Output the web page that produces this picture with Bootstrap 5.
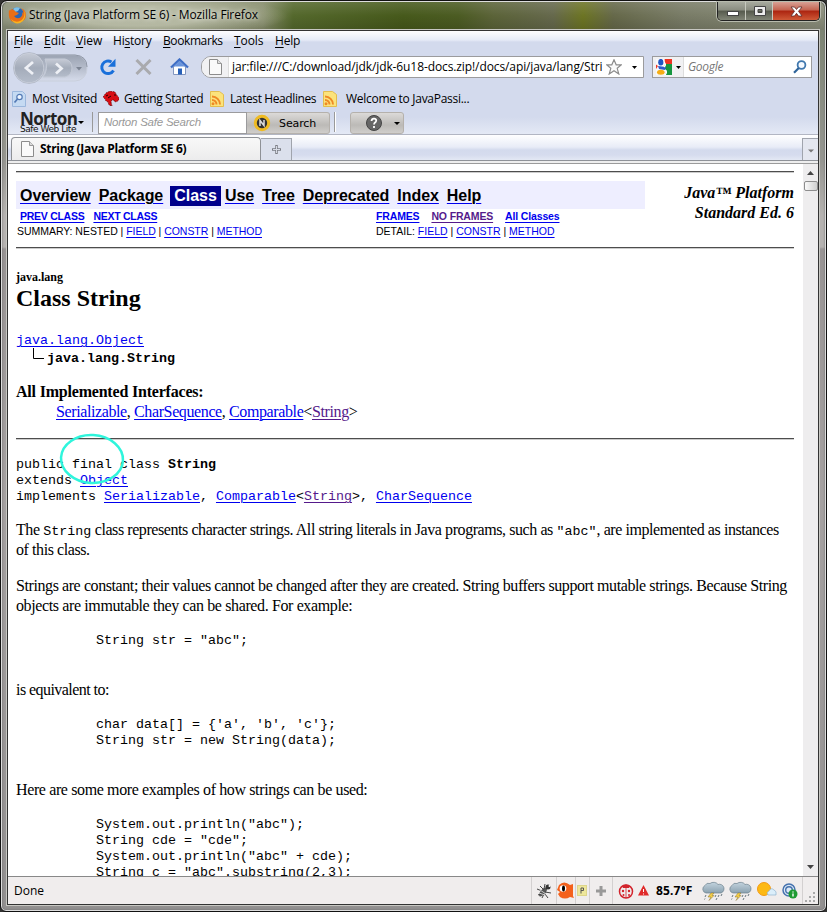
<!DOCTYPE html>
<html lang="en">
<head>
<meta charset="utf-8">
<title>String (Java Platform SE 6)</title>
<link href="https://cdn.jsdelivr.net/npm/bootstrap@5.3.0/dist/css/bootstrap.min.css" rel="stylesheet">
<style>
body{margin:0;background:#333;overflow:hidden}
.win{width:827px;height:912px;overflow:hidden;border:1px solid #111;border-radius:7px 7px 6px 6px;
 background:linear-gradient(#77806c 0,#969691 160px,#b5b2b0 215px,#b5b2b0 246px,#989494 248px,#a5a1a1 500px,#929090 100%);
 box-shadow:inset 0 0 0 1px #ddd,inset 0 0 2px 1px #666;font-family:"Open Sans","Noto Sans",sans-serif;font-size:12px;color:#000;line-height:16px}
.titlebar{height:28px;margin:1px 2px 0;border-radius:6px 6px 0 0;padding-left:5px;
 background:radial-gradient(ellipse 150px 22px at 135px 14px,rgba(190,193,172,.85) 45%,transparent 100%),linear-gradient(rgba(255,255,255,.12),transparent 50%,rgba(0,0,0,.12)),linear-gradient(90deg,#8b9079 0,#858c6a 260px,#54682c 290px,#46591b 400px,#4b5b22 455px,#5b6338 490px,#65684c 550px,#6c7423 580px,#656849 610px,#787b66 680px,#8a8d7b 100%)}
.ttl{font-size:12px;letter-spacing:-.12px;text-shadow:0 0 5px #fff}
.ctl{height:19px;margin-right:4px;border:1px solid #222;border-top:0;border-radius:0 0 5px 5px;box-shadow:0 0 0 1px #b8bbae;overflow:hidden}
.ctl>span{width:28px;background:linear-gradient(#a7aa9e,#8a8d80 45%,#565a4d 50%,#818576);border-right:1px solid #c8cabf}
.ctl>.mid{width:27px}
.ctl>.cls{width:46px;border:0;background:linear-gradient(#d8a195,#c46350 45%,#ac2410 50%,#cf5937)}
.inner{margin:0 7px 0 6px;height:875px;border:1px solid #333;background:#fff;position:relative;outline:1px solid #c7c7c2;width:812px}
.chrome{height:104px;background:linear-gradient(#fdfdfe 0,#e6ebf7 9px,#d3daed 11px,#d3daed 86px,#e4e9f5 103px);border-bottom:1px solid #b2b6c3}
.menus{height:19px;padding-left:6px}
.menus u{text-underline-offset:2px}
.m{flex:none;white-space:nowrap}
.navrow{height:35px;padding-left:3px}
.box{height:22px;background:#fff;border:1px solid #9b9b9d;overflow:hidden;flex:none}
.bm{height:27px;padding-left:4px}
.nrt{height:22px}
.nlogo{font:bold 17px/13px "Open Sans",sans-serif;letter-spacing:-.65px;color:#222}
.nlogo2{font:9px/9px "DejaVu Sans",sans-serif;letter-spacing:-.45px;color:#111}
.nbtn{height:22px;border:1px solid #b5b1ac;border-radius:3px;background:linear-gradient(#dcdad8,#bcbab7 60%,#d0cecb)}
.tabs{height:26px;background:linear-gradient(#fff 0,#e8ecf7 12px,#d3daed 15px,#d6dcee 20px,#e3e8f4);border-bottom:1px solid #8f9298;padding-left:3px}
.tab{width:250px;height:23px;margin-top:2px;border:1px solid #8e9196;border-bottom:0;border-radius:4px 4px 0 0;background:linear-gradient(#f8f8f8,#ececed);font-weight:bold;letter-spacing:-.31px}
.strip{height:3px;background:#eee;border-bottom:1px solid #9b9b9b}
.doc{height:712px;overflow:hidden;font-family:"Liberation Serif",serif;font-size:16px;line-height:20px;padding:7px 9px 0 8px;width:795px;flex:none}
.rule{height:2px;background:linear-gradient(#4d4d4d 50%,#ccc 50%)}
.doc a{color:#00e;text-decoration:underline;text-underline-offset:2px;text-decoration-thickness:1px}
.doc a.v{color:#551a8b}
.topnav{height:28px;width:629px;background:#eeeeff;padding:5px 4px 3px;font:bold 16px/19px "Liberation Sans",sans-serif}
.doc .topnav a{color:#000;text-decoration-color:#00e;margin-right:8px;letter-spacing:-.06px}
.topnav .cur{background:#00008b;color:#fff;padding:0 4px;margin:0 4px 0 -1px;height:20px}
.sub{font:10.500px/15px "Liberation Sans",sans-serif;width:629px;height:15px;white-space:nowrap}
.sub.fw-bold{letter-spacing:-.15px}
.sub div:first-child{width:360px;flex:none;letter-spacing:-.04px}
.sub.fw-bold div:first-child{letter-spacing:-.27px}
.mono{font:13.33px/16px "Liberation Mono",monospace;white-space:pre;margin:0;overflow:visible;color:#000}
.para{margin:16px 0;white-space:nowrap}
.para code{font:13.33px "Liberation Mono",monospace;color:#000;letter-spacing:0}
.t35{letter-spacing:-.38px}.t38{letter-spacing:-.39px}.t44{letter-spacing:-.427px}.t48{letter-spacing:-.415px}.t52{letter-spacing:-.55px}
.sb{width:15px;background:#eeedee;flex:none}
.thumb{width:14px;height:10px;border:1px solid #8d8d8d;border-radius:2px;background:linear-gradient(90deg,#fafafa,#cfcfcf)}
.status{height:28px;background:#f0eded;border-top:1px solid #888;padding-left:6px}
.cell{height:27px;border-left:1px solid #d3d0d0;flex:none}
.ring{position:absolute;left:51px;top:402px}
svg{display:block;flex:none}
</style>
<script src="https://cdn.jsdelivr.net/npm/bootstrap@5.3.0/dist/js/bootstrap.bundle.min.js"></script>
</head>
<body>
<svg width="0" height="0" class="position-absolute"><defs>
<linearGradient id="gp" x2="0" y2="1"><stop stop-color="#9ba3b2"/><stop offset=".5" stop-color="#b5bccb"/><stop offset="1" stop-color="#d6dceb"/></linearGradient>
<linearGradient id="gc" x2="0" y2="1"><stop stop-color="#c6cbd6"/><stop offset=".5" stop-color="#a4acba"/><stop offset="1" stop-color="#b5bdcb"/></linearGradient>
<linearGradient id="gcl" x2="0" y2="1"><stop stop-color="#c3d3de"/><stop offset="1" stop-color="#8ba2b0"/></linearGradient>
<symbol id="rss" viewBox="0 0 14 16"><path d="M.5.5h9l4 3v12h-13z" fill="#fbe37c" stroke="#e3bd4e"/><path d="M2 5.500a8 8 0 0 1 8 8M2 9a4.500 4.500 0 0 1 4.500 4.500" fill="none" stroke="#ef8a25" stroke-width="2"/><circle cx="3" cy="12.700" r="1.500" fill="#ef8a25"/></symbol>
<symbol id="page" viewBox="0 0 13 16"><path d="M.5.5h8l4 4v11h-12z" fill="#fafafa" stroke="#8c8c8c"/><path d="M8.500.5v4h4" fill="#ddd" stroke="#999"/></symbol>
<symbol id="rain" viewBox="0 0 24 20"><path d="M5 12a4 4 0 0 1-1-7.500 4 4 0 0 1 5-2 5 4 0 0 1 8 1 4 4 0 0 1 3 8.500z" fill="url(#gcl)" stroke="#6d818e" stroke-width=".7"/><path d="M10 12l-3 4h3l-2 3.500 5-5h-2l2-2.500z" fill="#f6cf45" stroke="#8a7430" stroke-width=".5"/><path d="M5 14l-1 2M15 14l-1 2M18 14l-1 2M16 17l-1 2M21 13l-1 2M4 17.500l-.5 1" stroke="#69777f"/></symbol>
</defs></svg>
<div class="win">
 <div class="titlebar d-flex align-items-start">
  <svg width="18" height="18" viewBox="0 0 18 18" style="margin-top:4px"><circle cx="9" cy="8.500" r="7" fill="#2c66b4"/><path d="M5 3q3-3 7-1l-2 3-3 1z" fill="#7fc3ec"/><path d="M1 3q0 2 1 1.500Q4 2.500 6 4l2 2 3 1-2 2-3 1q3 4 7 1 2-2 1-5 1 1 1 2 1-3-2-6 5 2 5 7 0 7-8 7.500Q1 17 .8 9 .7 6 1 3z" fill="#e96e16"/><path d="M16 4q2 8-4 11-5 2-9-2 5 8 12 2 4-5 1-11z" fill="#f9b31e"/></svg>
  <div class="ttl m" style="margin:5px auto 0 3px">String (Java Platform SE 6) - Mozilla Firefox</div>
  <div class="ctl d-flex">
   <span><svg width="28" height="19"><rect x="9.500" y="9.500" width="11" height="4" fill="#fff" stroke="#444"/></svg></span>
   <span class="mid"><svg width="27" height="19"><path d="M8.500 4.500h11v9h-11zM12 7.500h4v3h-4z" fill="#eee" stroke="#444" fill-rule="evenodd"/></svg></span>
   <span class="cls"><svg width="46" height="19"><path d="M18 5h3.500l2 2.500 2-2.500H29l-3.500 4.300L29 14h-3.500l-2-2.700-2 2.700H18l3.500-4.700z" fill="#fff" stroke="#5c2b2b" stroke-width=".8"/></svg></span>
  </div>
 </div>
 <div class="inner">
  <div class="chrome">
   <div class="menus d-flex align-items-center">
    <div class="m" style="width:30px"><u>F</u>ile</div><div class="m" style="width:32px"><u>E</u>dit</div><div class="m" style="width:37px"><u>V</u>iew</div><div class="m" style="width:50px;letter-spacing:-.2px">Hi<u>s</u>tory</div><div class="m" style="width:71px;letter-spacing:-.4px"><u>B</u>ookmarks</div><div class="m" style="width:41px;letter-spacing:-.1px"><u>T</u>ools</div><div class="m" style="letter-spacing:-.2px"><u>H</u>elp</div>
   </div>
   <div class="navrow d-flex align-items-center">
    <svg width="78" height="32" viewBox="0 0 78 32"><path d="M15 3H64a12 12 0 0 1 12 13 12 12 0 0 1-12 13H15z" fill="url(#gp)" stroke="#c9cfdc"/><path d="M15 3H64q12 1 12 12" fill="none" stroke="#8e96a5"/><path d="M34 7h20q7 2 7 9t-7 9H32q6-8 2-18z" fill="url(#gc)" stroke="#c4cad6"/><circle cx="18" cy="16" r="15" fill="url(#gc)" stroke="#d0d5e0"/><circle cx="18" cy="16" r="15.500" fill="none" stroke="#a2a9b7" stroke-width=".6"/><path d="M22 10l-7 6 7 6M45 11.500l5.500 5-5.500 5" fill="none" stroke="#eef0f5" stroke-width="2.800"/><path d="M65 15h6l-3 3.500z" fill="#7c8493"/></svg>
    <svg width="18" height="18" viewBox="0 0 18 18" style="margin-left:10px;margin-top:-2px"><path d="M14.500 12.500A6.300 6.300 0 1 1 12.500 4" fill="none" stroke="#1a70da" stroke-width="3"/><path d="M16.500.8v8H9z" fill="#1a70da"/></svg>
    <svg width="17" height="16" viewBox="0 0 17 16" style="margin-left:18px;margin-top:-2px"><path d="M1.500 1l14 14M15.500 1l-14 14" stroke="#a9aaae" stroke-width="3"/></svg>
    <svg width="19" height="18" viewBox="0 0 19 18" style="margin-left:18px;margin-top:-2px"><path d="M3.500 9v7.500h12V9l-6-6z" fill="#fff" stroke="#8296c0"/><path d="M1 9.500l8.500-8 8.500 8" fill="none" stroke="#3e6ec6" stroke-width="2.300"/><path d="M4 8.500l5.500-5.500L15 8.500z" fill="#6893dc"/><path d="M8 10.500h4v6H8z" fill="#2860b8"/></svg>
    <div class="box d-flex align-items-center" style="width:443px;margin-left:12px;margin-top:-1px;border-radius:10px 0 0 10px">
     <div class="d-flex align-items-center justify-content-center h-100 flex-shrink-0" style="width:27px;background:#f1f1f3;border-right:1px solid #ddd"><svg width="13" height="16"><use href="#page"/></svg></div>
     <div class="m" style="width:374px;margin-left:3px;letter-spacing:-.1px">jar:file:///C:/download/jdk/jdk-6u18-docs.zip!/docs/api/java/lang/Stri</div>
     <svg width="16" height="16" viewBox="0 0 16 16"><path d="M8 .8l2.200 5h5.200l-4.200 3.500 1.600 5.700L8 11.800 3.200 15l1.600-5.700L.6 5.800h5.200z" fill="#fafafa" stroke="#8c8c8c" stroke-width="1.200"/></svg>
     <svg width="5" height="3" style="margin-left:10px"><path d="M0 0h5L2.500 3z"/></svg>
    </div>
    <div class="box d-flex align-items-center" style="width:160px;margin-left:8px;margin-top:-1px">
     <div class="d-flex align-items-center h-100 flex-shrink-0" style="width:31px;background:#f1f1f3;border-right:1px solid #ddd;padding-left:3px"><svg width="16" height="16" viewBox="0 0 16 16"><path d="M8 0h8v5H9z" fill="#e32"/><path d="M9 5h7v11H9l2-4-3-3z" fill="#16963f"/><path d="M0 0h9v16H0z" fill="#fff" opacity=".6"/><path d="M0 5.500l2 1.500-2 3z" fill="#e32"/><ellipse cx="4.800" cy="3.200" rx="2.600" ry="3.300" fill="#1d54c4"/><path d="M2 7l8 1-1 3-6-1z" fill="#2b5bcc"/><path d="M8 3q3 3 0 5M9 11q3 2 0 5" fill="none" stroke="#fff" stroke-width="1.200"/><ellipse cx="4.800" cy="13.300" rx="3.800" ry="2.500" fill="#f5ad15"/></svg><svg width="5" height="3" style="margin-left:4px"><path d="M0 0h5L2.500 3z"/></svg></div>
     <div class="m fst-italic" style="margin-left:4px;color:#777;letter-spacing:-.3px">Google</div>
     <svg width="14" height="14" viewBox="0 0 14 14" class="ms-auto" style="margin-right:4px"><circle cx="8.500" cy="5" r="3.900" fill="#f4f9ff" stroke="#4078ae" stroke-width="1.800"/><path d="M5.800 8L1 12.800" stroke="#2f649a" stroke-width="2.200"/></svg>
    </div>
   </div>
   <div class="bm d-flex align-items-center">
    <svg width="14" height="16" viewBox="0 0 14 16"><path d="M.5.5h10l3 3v12H.5z" fill="#c5daf2" stroke="#9bb7dc"/><circle cx="7.500" cy="6" r="2.700" fill="#eef6ff" stroke="#5379b5" stroke-width="1.200"/><path d="M5.500 8L2.500 11.500" stroke="#5379b5" stroke-width="1.700"/></svg>
    <div class="m" style="width:71px;margin-left:6px;letter-spacing:-.28px">Most Visited</div>
    <svg width="16" height="15" viewBox="0 0 16 15"><path d="M0 6l3-4 4-2 5 1 1 2 3 4v2l-3 2-2-1 0-1-2 0-1 2 1 4-3-1-1-3-2-1-1-2z" fill="#d80c12" stroke="#5b0708" stroke-width=".7" stroke-dasharray="1.500 1"/><path d="M11 4h2M3 5l2-1M5 7l3-2" stroke="#200"/></svg>
    <div class="m" style="width:81px;margin-left:5px;letter-spacing:-.38px">Getting Started</div>
    <svg width="14" height="16" style="margin-left:5px"><use href="#rss"/></svg>
    <div class="m" style="width:87px;margin-left:6px;letter-spacing:-.4px">Latest Headlines</div>
    <svg width="14" height="16" style="margin-left:6px"><use href="#rss"/></svg>
    <div class="m" style="margin-left:9px;letter-spacing:-.28px">Welcome to JavaPassi...</div>
   </div>
   <div class="nrt d-flex">
    <div style="width:77px;padding:0 0 0 12px"><div class="nlogo m">Norton</div><div class="nlogo2 m">Safe Web Lite</div></div>
    <svg width="6" height="3" style="margin:9px 0 0 -7px"><path d="M0 0h6L3 3z"/></svg>
    <div style="width:1px;height:20px;background:#999;margin:0 0 0 8px"></div>
    <div class="box m" style="width:149px;margin-left:5px;padding:1px 5px 0;color:#999;font:italic 11.500px/17px 'Liberation Sans',sans-serif;letter-spacing:-.22px">Norton Safe Search</div>
    <div class="nbtn d-flex align-items-center" style="width:83px;border-left:0;border-radius:0 3px 3px 0"><svg width="18" height="18" style="margin-left:6px"><circle cx="9" cy="9" r="6.700" fill="#333" stroke="#efbb23" stroke-width="3"/><path d="M7 12V6.500l4 5V6" fill="none" stroke="#ddd" stroke-width="1.500"/></svg><div class="m" style="margin-left:8px;font:11px 'DejaVu Sans',sans-serif;letter-spacing:-.1px">Search</div></div>
    <div style="width:2px;height:20px;background:#fff;border-left:1px solid #999;margin:0 15px 0 4px"></div>
    <div class="nbtn d-flex align-items-center" style="width:54px;margin-left:-1px"><svg width="16" height="16" style="margin-left:15px"><circle cx="8" cy="8" r="7.500" fill="#666" stroke="#444"/><path d="M5.500 6q.3-2.500 2.700-2.300 3 .6 1.600 3Q8 8 8 9.500M8 11v2" fill="none" stroke="#fff" stroke-width="1.800"/></svg><svg width="6" height="3" style="margin-left:12px"><path d="M0 0h6L3 3z"/></svg></div>
   </div>
  </div>
  <div class="tabs d-flex">
   <div class="tab d-flex align-items-center"><svg width="13" height="16" style="margin:0 6px 0 9px"><use href="#page"/></svg><span class="m">String (Java Platform SE 6)</span></div>
   <div style="width:31px;height:22px;border:1px solid #a0a4ad;border-bottom:0;margin-top:3px;border-left:0;background:#dbe0ec"><svg width="30" height="22"><path d="M15.500 6v9M11 10.500h9" stroke="#7b7e85" stroke-width="2.500"/><path d="M15.500 7v7M12 10.500h7" stroke="#d6dae4" stroke-width="1"/></svg></div>
   <div class="ms-auto" style="width:16px;height:22px;border:1px solid #a0a4ad;border-bottom:0;border-right:0;margin-top:3px;background:#e4e7f0"><svg width="15" height="22"><path d="M5 10.500h6l-3 3z" fill="#777"/></svg></div>
  </div>
  <div class="strip"></div>
  <div class="d-flex">
   <div class="doc">
    <div class="rule"></div>
    <div class="d-flex" style="height:74px;padding-top:8px">
     <div>
      <div class="topnav d-flex"><a href="#">Overview</a><a href="#">Package</a><span class="cur">Class</span><a href="#">Use</a><a href="#">Tree</a><a href="#">Deprecated</a><a href="#">Index</a><a href="#">Help</a></div>
      <div class="sub d-flex fw-bold" style="padding-left:4px"><div style="width:356px"><a href="#">PREV CLASS</a><a href="#" style="margin-left:9px">NEXT CLASS</a></div><div><a href="#">FRAMES</a><a href="#" class="v" style="margin:0 12px">NO FRAMES</a><a href="#">All Classes</a></div></div>
      <div class="sub d-flex"><div style="padding-left:1px">SUMMARY: NESTED | <a href="#">FIELD</a> | <a href="#">CONSTR</a> | <a href="#">METHOD</a></div><div>DETAIL: <a href="#">FIELD</a> | <a href="#">CONSTR</a> | <a href="#">METHOD</a></div></div>
     </div>
     <div class="fw-bold fst-italic text-end flex-fill m" style="padding-top:2px">Java™ Platform<br>Standard Ed. 6</div>
    </div>
    <div class="rule"></div>
    <div class="fw-bold" style="font-size:12px;line-height:16px;margin-top:20px">java.lang</div>
    <div class="fw-bold" style="font-size:24px;line-height:27px">Class String</div>
    <div class="mono" style="margin-top:21px"><a href="#">java.lang.Object</a></div>
    <div class="mono d-flex fw-bold" style="height:18px;padding-top:2px"><svg width="12" height="12" viewBox="0 0 12 12" style="margin:-3px 3px 0 17px"><path d="M.5 0v10.500H11" fill="none" stroke="#000"/></svg><span style="margin-left:-1px">java.lang.String</span></div>
    <div class="fw-bold" style="margin-top:15px;letter-spacing:-.2px">All Implemented Interfaces:</div>
    <div style="padding-left:40px;margin-bottom:16px" class="m t38"><a href="#">Serializable</a>, <a href="#">CharSequence</a>, <a href="#">Comparable</a>&lt;<a href="#" class="v">String</a>&gt;</div>
    <div class="rule"></div>
    <pre class="mono" style="margin-top:17px">public final class <b>String</b>
extends <a href="#">Object</a>
implements <a href="#">Serializable</a>, <a href="#">Comparable</a>&lt;<a href="#" class="v">String</a>&gt;, <a href="#">CharSequence</a></pre>
    <div class="para" style="margin:15px 0 16px"><span class="t44">The <code>String</code> class represents character strings. All string literals in Java programs, such as <code>"abc"</code>, are implemented as instances</span><br><span class="t44">of this class.</span></div>
    <div class="para" style="margin-bottom:17px"><span class="t48">Strings are constant; their values cannot be changed after they are created. String buffers support mutable strings. Because String</span><br><span class="t35">objects are immutable they can be shared. For example:</span></div>
    <pre class="mono">          String str = "abc";</pre>
    <div class="para t52" style="margin:31px 0 17px">is equivalent to:</div>
    <pre class="mono">          char data[] = {'a', 'b', 'c'};
          String str = new String(data);</pre>
    <div class="para t35" style="margin:31px 0 17px">Here are some more examples of how strings can be used:</div>
    <pre class="mono">          System.out.println("abc");
          String cde = "cde";
          System.out.println("abc" + cde);
          String c = "abc".substring(2,3);</pre>
   </div>
   <div class="sb d-flex flex-column align-items-center">
    <svg width="15" height="17"><path d="M4 11h7L7.500 7z" fill="#444"/></svg>
    <div class="thumb"></div>
    <svg width="15" height="18" class="mt-auto"><path d="M4 7h7l-3.500 4z" fill="#444"/></svg>
   </div>
  </div>
  <div class="status d-flex align-items-center">
   <div class="m me-auto">Done</div>
   <div class="cell d-flex align-items-center" style="width:25px;padding-left:4px"><svg width="16" height="16" viewBox="0 0 16 16"><ellipse cx="7" cy="9" rx="2.500" ry="5.500" transform="rotate(40 7 9)" fill="#555"/><circle cx="12" cy="4" r="2.500" fill="#333"/><circle cx="13.500" cy="3" r="1" fill="#fff"/><path d="M1 6l5 2M2 12l4-2M6 15l2-4M4 3l4 4M9 9l6 1M9 11l3 4M8 6L9 1" stroke="#444"/><path d="M4 7l6 4M3 10l6 2" stroke="#ccc"/></svg></div>
   <div class="cell d-flex align-items-center" style="width:19px"><svg width="18" height="17" viewBox="0 0 18 17"><path d="M0 8L2 3q5-5 11 0l3-1v12l1 2-4-1q-5 3-10 0l-2-3 2-2z" fill="#f4611c"/><circle cx="6" cy="6.500" r="3.300" fill="#fff"/><ellipse cx="6.500" cy="6.500" rx="1.500" ry="3"/></svg></div>
   <div class="cell d-flex align-items-center" style="width:14px"><svg width="12" height="11"><rect x="1.500" y=".5" width="9" height="10" fill="#eee79b" stroke="#ddd58a"/><path d="M5 8.500V3h2.500v2.500H5" fill="none" stroke="#555"/></svg></div>
   <div class="cell d-flex align-items-center" style="width:23px;padding-left:6px"><svg width="10" height="10"><path d="M5 0v10M0 5h10" stroke="#999" stroke-width="3"/></svg></div>
   <div class="cell d-flex align-items-center" style="width:190px;padding-left:5px"><svg width="16" height="16" viewBox="0 0 16 16"><circle cx="8" cy="8.500" r="6.500" fill="#f1eeee" stroke="#d2232c" stroke-width="1.500"/><path d="M4 3q4-3 8 0l-1 2H5z" fill="#d2232c"/><path d="M8 4v11" stroke="#d2232c" stroke-width=".8"/><circle cx="5" cy="8" r="1.200" fill="#d2232c"/><circle cx="11" cy="8" r="1.200" fill="#d2232c"/><circle cx="5.500" cy="12" r="1" fill="#d2232c"/><circle cx="11" cy="12" r="1" fill="#d2232c"/></svg>
    <svg width="11" height="11" style="margin-left:4px"><path d="M5.500 0L11 10.500H0z" fill="#e02a2a"/><path d="M5.500 4v3M5.500 8.500v1" stroke="#fff"/></svg>
    <div class="m fw-bold" style="margin-left:7px;width:45px;font-family:'Noto Sans',sans-serif;letter-spacing:.15px">85.7°F</div>
    <svg width="24" height="20"><use href="#rain"/></svg><svg width="24" height="20" style="margin-left:3px"><use href="#rain"/></svg>
    <svg width="20" height="17" viewBox="0 0 20 17" style="margin-left:5px"><circle cx="7" cy="7" r="6.500" fill="#fdb913" stroke="#f29a15"/><path d="M11 13q-2-3 1-4 2-4 5-1 3 1 2 5z" fill="#dbeefa" stroke="#93b6d0" stroke-width=".7"/></svg>
    <svg width="16" height="16" viewBox="0 0 16 16" style="margin-left:5px"><circle cx="7" cy="7" r="6" fill="#dce8f6" stroke="#4672ae" stroke-width="1.500"/><circle cx="7" cy="7" r="3.300" fill="none" stroke="#4672ae" stroke-width="1.400"/><circle cx="11" cy="11" r="4.500" fill="#1e9a32"/><path d="M11 8.500v1M11 10.500v3" stroke="#fff" stroke-width="1.400"/></svg></div>
   <div class="cell d-flex align-items-end" style="width:16px"><svg width="14" height="14"><path d="M10 3h2M10 7h2M6 7h2M10 11h2M6 11h2M2 11h2" stroke="#aaa" stroke-width="2"/></svg></div>
  </div>
  <svg class="ring" width="68" height="54"><ellipse cx="33" cy="26" rx="31" ry="24" fill="none" stroke="#2ff5dc" stroke-width="2.500" transform="rotate(3 33 26)"/></svg>
 </div>
</div>
</body>
</html>
